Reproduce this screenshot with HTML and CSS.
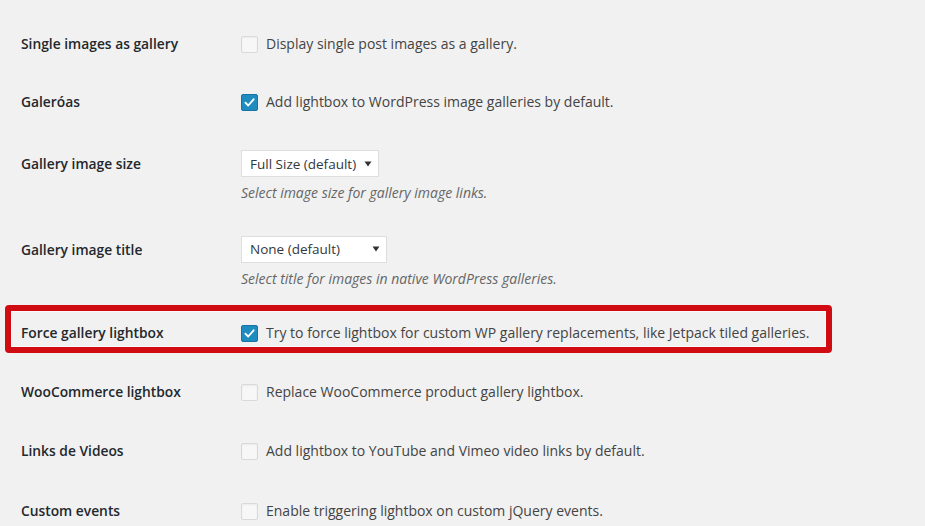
FILE: index.html
```html
<!DOCTYPE html>
<html lang="en">
<head>
<meta charset="utf-8">
<title>Lightbox settings</title>
<link rel="stylesheet" href="styles.css">
</head>
<body>
<div class="settings">
  <div class="row row-top">
    <div class="label">Single images as gallery</div>
    <div class="field"><span class="cb"></span><span class="text">Display single post images as a gallery.</span></div>
  </div>
  <div class="row row-top">
    <div class="label">Galeróas</div>
    <div class="field"><span class="cb checked"><svg viewBox="0 0 16 16"><path d="M3.6 8.2 L6.6 11.2 L12.4 4.6"/></svg></span><span class="text">Add lightbox to WordPress image galleries by default.</span></div>
  </div>
  <div class="row row-select">
    <div class="label">Gallery image size</div>
    <div class="field-col">
      <div class="select w1"><span>Full Size (default)</span><svg class="arrow" viewBox="0 0 8 8"><path d="M0.5 1.5 H7.5 L4 6.5 Z"/></svg></div>
      <div class="desc">Select image size for gallery image links.</div>
    </div>
  </div>
  <div class="row row-select row-select-last">
    <div class="label">Gallery image title</div>
    <div class="field-col">
      <div class="select w2"><span>None (default)</span><svg class="arrow" viewBox="0 0 8 8"><path d="M0.5 1.5 H7.5 L4 6.5 Z"/></svg></div>
      <div class="desc">Select title for images in native WordPress galleries.</div>
    </div>
  </div>
  <div class="row highlight">
    <div class="label">Force gallery lightbox</div>
    <div class="field"><span class="cb checked"><svg viewBox="0 0 16 16"><path d="M3.6 8.2 L6.6 11.2 L12.4 4.6"/></svg></span><span class="text">Try to force lightbox for custom WP gallery replacements, like Jetpack tiled galleries.</span></div>
  </div>
  <div class="row">
    <div class="label">WooCommerce lightbox</div>
    <div class="field"><span class="cb"></span><span class="text">Replace WooCommerce product gallery lightbox.</span></div>
  </div>
  <div class="row row-wide">
    <div class="label">Links de Videos</div>
    <div class="field"><span class="cb"></span><span class="text">Add lightbox to YouTube and Vimeo video links by default.</span></div>
  </div>
  <div class="row">
    <div class="label">Custom events</div>
    <div class="field"><span class="cb"></span><span class="text">Enable triggering lightbox on custom jQuery events.</span></div>
  </div>
</div>
</body>
</html>
```
FILE: styles.css
```css
html, body {
  margin: 0;
  padding: 0;
  background: #f1f1f1;
  height: 100%;
  overflow: hidden;
}
body {
  font-family: "Open Sans", "Noto Sans", sans-serif;
  font-size: 14px;
  color: #444;
}
.settings {
  padding: 34px 0 0 21px;
}
.row {
  display: grid;
  grid-template-columns: 220px auto;
  align-items: start;
  padding-bottom: 39px;
  line-height: 20px;
}
.row-top {
  padding-bottom: 38px;
}
.row-select {
  padding-bottom: 32.5px;
}
.row-select-last {
  padding-bottom: 34.5px;
}
.row-wide {
  padding-bottom: 40px;
}
.row-select .label {
  padding-top: 4px;
}
.label {
  font-weight: 600;
  color: #23282d;
  font-size: 13.8px;
}
.field {
  display: flex;
  align-items: center;
  gap: 8px;
}
.cb {
  box-sizing: border-box;
  width: 17px;
  height: 17px;
  border: 1px solid #d9d9d9;
  border-radius: 2px;
  background: #f7f7f7;
  box-shadow: inset 0 1px 2px rgba(0,0,0,0.05);
  display: inline-flex;
  flex: none;
}
.cb.checked {
  background: #1e8cbe;
  border-color: #1673a3;
  box-shadow: none;
}
.cb svg {
  width: 100%;
  height: 100%;
}
.cb svg path {
  fill: none;
  stroke: #fff;
  stroke-width: 2;
  stroke-linecap: round;
  stroke-linejoin: round;
}
.text {
  white-space: nowrap;
}
.field-col {
  display: flex;
  flex-direction: column;
  align-items: flex-start;
}
.select {
  box-sizing: border-box;
  height: 27px;
  display: flex;
  align-items: center;
  justify-content: space-between;
  background: #fff;
  border: 1px solid #dedede;
  padding: 0 6px 0 8px;
  color: #32373c;
  font-size: 13.5px;
}
.select.w1 { width: 138px; }
.select.w2 { width: 146px; }
.arrow {
  width: 8px;
  height: 8px;
  fill: #333;
}
.desc {
  margin-top: 6px;
  font-style: italic;
  color: #666;
  font-size: 14px;
}
.highlight {
  position: relative;
}
.highlight::after {
  content: "";
  position: absolute;
  left: -16px;
  top: -18px;
  width: 827px;
  height: 48px;
  box-sizing: border-box;
  border: 6px solid #d10b12;
  border-radius: 4px;
  box-shadow: inset 0 0 0 1px #fafafa;
  pointer-events: none;
}
```
